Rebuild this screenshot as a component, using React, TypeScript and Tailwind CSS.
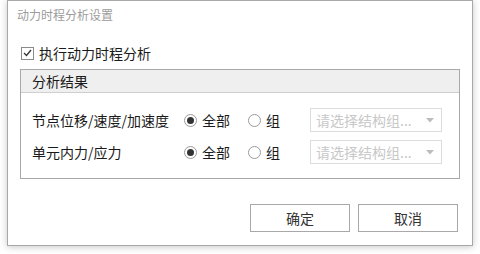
import React from "react";

const font = { fontFamily: '"Noto Sans CJK SC", "Noto Sans", sans-serif' };

function Radio({ checked }: { checked: boolean }) {
  return (
    <span className="w-[13px] h-[13px] rounded-full border border-[#9a9a9a] bg-white flex items-center justify-center shrink-0">
      {checked && <span className="w-[7px] h-[7px] rounded-full bg-[#333]" />}
    </span>
  );
}

function Select() {
  return (
    <div className="w-[132px] h-[24px] border border-[#dcdcdc] bg-white flex items-center pl-[5px] pr-[7px]">
      <span className="flex-1 text-[14px] leading-none text-[#c8c8c8]">请选择结构组...</span>
      <svg width="8" height="5" viewBox="0 0 8 5">
        <polygon points="0,0 8,0 4,4.5" fill="#bdbdbd" />
      </svg>
    </div>
  );
}

function Row({ label }: { label: string }) {
  return (
    <div className="flex items-center h-[24px]">
      <span className="w-[152px] text-[14px] leading-none text-[#1a1a1a]">{label}</span>
      <div className="w-[64px] flex items-center">
        <Radio checked />
        <span className="ml-[5px] text-[14px] leading-none text-[#1a1a1a]">全部</span>
      </div>
      <div className="w-[62px] flex items-center">
        <Radio checked={false} />
        <span className="ml-[5px] text-[14px] leading-none text-[#1a1a1a]">组</span>
      </div>
      <Select />
    </div>
  );
}

export default function App() {
  return (
    <div className="w-[480px] h-[254px] bg-white overflow-hidden" style={font}>
      <div className="ml-[7px] w-[466px] h-[246px] bg-white border border-[#a8a8a8] shadow-[0_1px_7px_rgba(0,0,0,0.22)] flex flex-col">
        <div className="h-[28px] pl-[9px] flex items-center text-[12px] leading-none text-[#9c9c9c]">
          动力时程分析设置
        </div>
        <div className="mt-[14px] h-[20px] ml-[13px] flex items-center">
          <span className="w-[13px] h-[13px] border border-[#8a8a8a] bg-white flex items-center justify-center">
            <svg width="9" height="8" viewBox="0 0 9 8">
              <polyline points="1,4 3.5,6.5 8,1" fill="none" stroke="#333" strokeWidth="1.3" />
            </svg>
          </span>
          <span className="ml-[5px] text-[14px] leading-none text-[#1a1a1a]">执行动力时程分析</span>
        </div>
        <div className="mt-[6px] ml-[12px] w-[440px] border border-[#a8a8a8]">
          <div className="h-[23px] bg-[#efefef] border-b border-[#cfcfcf] pl-[11px] flex items-center text-[14px] leading-none text-[#1a1a1a]">
            分析结果
          </div>
          <div className="pl-[11px] pt-[15px] pb-[14px] flex flex-col gap-[8px]">
            <Row label="节点位移/速度/加速度" />
            <Row label="单元内力/应力" />
          </div>
        </div>
        <div className="mt-[25px] pr-[14px] flex justify-end gap-[8px]">
          <button className="w-[100px] h-[28px] border border-[#a8a8a8] bg-white text-[14px] leading-none text-[#333]">确定</button>
          <button className="w-[100px] h-[28px] border border-[#a8a8a8] bg-white text-[14px] leading-none text-[#333]">取消</button>
        </div>
      </div>
    </div>
  );
}
